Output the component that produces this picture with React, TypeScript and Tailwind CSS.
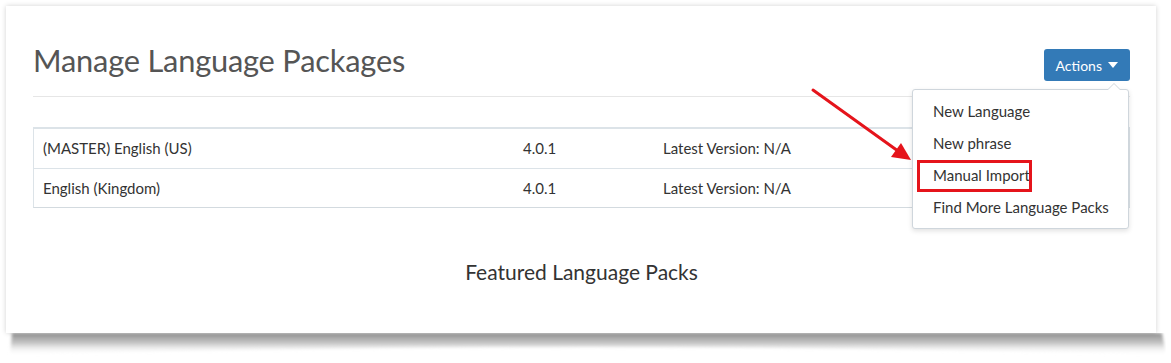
import { useState } from 'react';

const languages = [
  { name: '(MASTER) English (US)', version: '4.0.1', latest: 'Latest Version: N/A' },
  { name: 'English (Kingdom)', version: '4.0.1', latest: 'Latest Version: N/A' },
];

const menuItems = ['New Language', 'New phrase', 'Manual Import', 'Find More Language Packs'];

function CurlShadow() {
  return (
    <svg width="1160" height="26" viewBox="0 0 1160 26" className="block">
      <defs>
        <linearGradient id="curl" x1="0" y1="0" x2="0" y2="1">
          <stop offset="0" stopColor="#929292" />
          <stop offset="0.45" stopColor="#c4c4c4" />
          <stop offset="1" stopColor="#ffffff" stopOpacity="0" />
        </linearGradient>
        <filter id="soft" x="-5%" y="-50%" width="110%" height="200%">
          <feGaussianBlur stdDeviation="1.6" />
        </filter>
      </defs>
      <path
        d="M6 0 L1156 0 L1160 22 Q580 6 4 22 Z"
        fill="url(#curl)"
        filter="url(#soft)"
      />
    </svg>
  );
}

export default function App() {
  const [open] = useState(true);

  return (
    <div className="relative w-[1171px] h-[363px] bg-white overflow-hidden font-['Lato',sans-serif]">
      <div className="pt-[6px] pl-[6px]">
        {/* Panel */}
        <div className="relative w-[1150px] h-[327px] bg-white shadow-[0_0_5px_rgba(0,0,0,0.18)] pl-[27px] pr-[26px] pt-[35px]">
          <div className="flex items-start justify-between">
            <h1 className="mt-[2px] text-[30.8px] leading-[36px] text-[#555] tracking-[-0.2px]">Manage Language Packages</h1>
            <div className="relative mt-[8px]">
              <button className="h-[32px] px-[12px] rounded-[3px] bg-[#337ab7] text-white text-[14px] flex items-center gap-[6px]">
                Actions
                <span className="w-0 h-0 border-l-[5px] border-r-[5px] border-t-[6px] border-l-transparent border-r-transparent border-t-white" />
              </button>
              {open && (
                <div className="absolute right-[1px] top-[40px] w-[217px] bg-white border border-[#cfd6dc] rounded-[3px] shadow-[0_2px_5px_rgba(0,0,0,0.12)] pt-[5px] pb-[5px] z-10">
                  <span className="absolute -top-[7px] right-[7px] w-0 h-0 border-l-[7px] border-r-[7px] border-b-[7px] border-l-transparent border-r-transparent border-b-[#cfd6dc]" />
                  <span className="absolute -top-[6px] right-[8px] w-0 h-0 border-l-[6px] border-r-[6px] border-b-[6px] border-l-transparent border-r-transparent border-b-white" />
                  {menuItems.map((item) => (
                    <div key={item} className="relative h-[32px] flex items-center pl-[20px] text-[15px] text-[#333] whitespace-nowrap">
                      {item}
                      {item === 'Manual Import' && (
                        <span className="absolute left-[4px] top-[1px] w-[115px] h-[32px] border-[3px] border-[#e5141b]" />
                      )}
                    </div>
                  ))}
                </div>
              )}
            </div>
          </div>

          <div className="mt-[15px] border-t border-[#e6e6e6]" />

          <div className="mt-[30px] border-t-2 border-[#dce3e8] border-x border-b border-x-[#dce3e8] border-b-[#d3dadf]">
            {languages.map((lang, i) => (
              <div
                key={lang.name}
                className={`grid grid-cols-[479px_140px_1fr] h-[39px] items-center text-[15px] text-[#333] ${i > 0 ? 'border-t border-[#dce3e8]' : ''}`}
              >
                <div className="pl-[9px]">{lang.name}</div>
                <div className="pl-[10px]">{lang.version}</div>
                <div className="pl-[10px]">{lang.latest}</div>
              </div>
            ))}
          </div>

          <h2 className="mt-[50px] text-center text-[21px] leading-[28px] text-[#333]">Featured Language Packs</h2>
        </div>
        <CurlShadow />
      </div>

      {/* Annotation arrow */}
      <svg className="absolute left-0 top-0 pointer-events-none" width="1171" height="363">
        <line x1="813" y1="90" x2="898" y2="151" stroke="#e5141b" strokeWidth="3" strokeLinecap="round" />
        <polygon points="911,160 891,157 901,143" fill="#e5141b" />
      </svg>
    </div>
  );
}
